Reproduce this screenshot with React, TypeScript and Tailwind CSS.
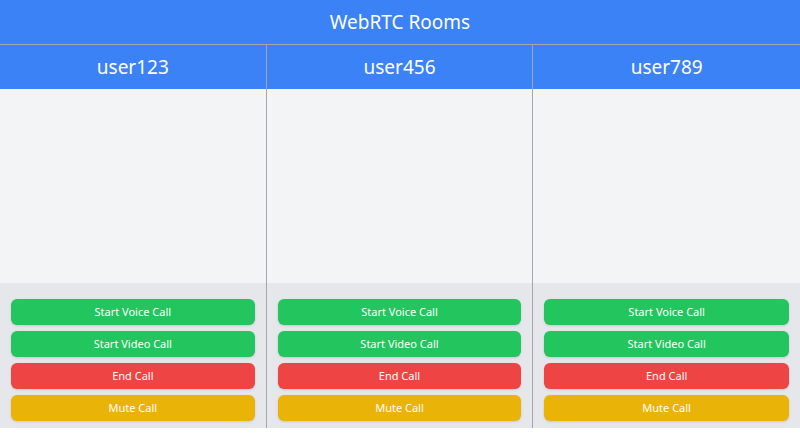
const users = ["user123", "user456", "user789"]

const btn = "h-[26px] rounded-md text-[11px] text-white shadow-sm"

const RoomColumn = ({ name, last }: { name: string; last: boolean }) => {
  return (
    <div className={`flex flex-col border-t border-[#a3a6ad] ${last ? "" : "border-r"}`}>
      <div className="bg-[#3b82f6] py-2 text-center text-[19px] leading-7 text-white">{name}</div>
      {/* video area */}
      <div className="h-[194px] bg-[#f3f4f6]"></div>
      <div className="flex h-[145px] flex-col gap-1.5 bg-[#e5e7eb] px-[11px] pt-4">
        <button className={`${btn} bg-[#22c55e]`}>Start Voice Call</button>
        <button className={`${btn} bg-[#22c55e]`}>Start Video Call</button>
        <button className={`${btn} bg-[#ef4444]`}>End Call</button>
        <button className={`${btn} bg-[#eab308]`}>Mute Call</button>
      </div>
    </div>
  )
}

export default function App() {
  return (
    <div className="min-h-screen bg-white" style={{ fontFamily: '"Noto Sans", "Open Sans", sans-serif' }}>
      <div className="bg-[#3b82f6] py-2 text-center text-[19px] leading-7 text-white">WebRTC Rooms</div>
      <div className="grid grid-cols-3">
        {users.map((u, i) => (
          <RoomColumn key={u} name={u} last={i === users.length - 1} />
        ))}
      </div>
    </div>
  )
}
